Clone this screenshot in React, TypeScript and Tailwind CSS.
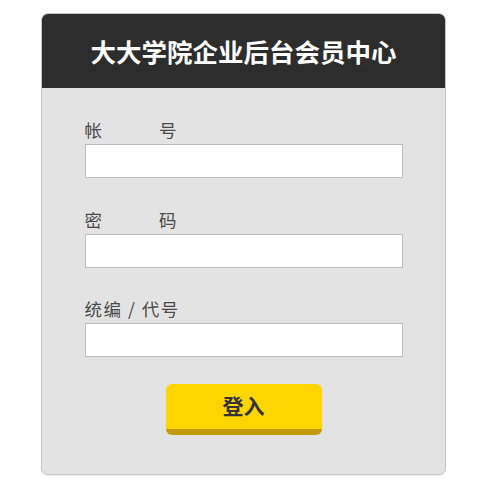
import React from 'react';

const font = { fontFamily: '"Noto Sans CJK SC", "Noto Sans", sans-serif' };

const fields = [
  { id: 'account', label: ['帐', '号'] },
  { id: 'password', label: ['密', '码'], type: 'password' },
  { id: 'code', label: ['统编 / 代号'] },
];

export default function App() {
  return (
    <div className="min-h-screen bg-white pt-[13px]" style={font}>
      <div className="mx-auto w-[405px] overflow-hidden rounded-[7px] border border-[#c6c6c6] bg-[#e3e3e3] shadow-[0_1px_1px_rgba(0,0,0,0.08)]">
        {/* header */}
        <div className="flex h-[74px] items-center justify-center bg-[#2d2d2d]">
          <h1 className="text-[25.5px] font-bold leading-none text-white">大大学院企业后台会员中心</h1>
        </div>

        <form className="flex flex-col items-center pt-[31px] pb-[39px]" onSubmit={(e) => e.preventDefault()}>
          {fields.map((f) => (
            <div key={f.id} className="mb-[30.5px] w-[318px]">
              <label
                htmlFor={f.id}
                className={`mb-[3px] flex h-[22px] text-[17.5px] leading-[22px] text-[#4a4a4a] ${
                  f.label.length > 1 ? 'w-[92px] justify-between' : 'tracking-[1.5px]'
                }`}
              >
                {f.label.map((t) => (
                  <span key={t}>{t}</span>
                ))}
              </label>
              <input
                id={f.id}
                type={f.type || 'text'}
                className="block h-[34px] w-full border border-[#bdbdbd] bg-white px-2 text-[15px] outline-none"
              />
            </div>
          ))}

          <button
            type="submit"
            className="-mt-[4px] h-[51px] w-[156px] rounded-[6px] border-b-[6px] border-[#c39b0d] bg-[#ffd500] text-[21px] font-bold text-[#333]"
          >
            登入
          </button>
        </form>
      </div>
    </div>
  );
}
